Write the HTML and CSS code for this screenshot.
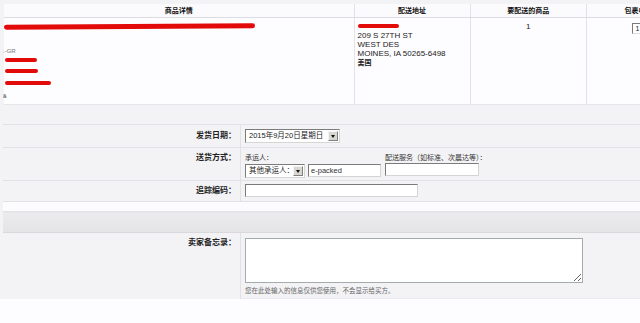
FILE: index.html
```html
<!DOCTYPE html>
<html lang="zh-CN">
<head>
  <meta charset="UTF-8">
  <title>确认发货</title>
  <link rel="stylesheet" href="styles.css">
</head>
<body>
<div class="page">
  <table class="items">
    <thead>
      <tr>
        <th class="c1">商品详情</th>
        <th class="c2">配送地址</th>
        <th class="c3">要配送的商品</th>
        <th class="c4">包裹中的商品</th>
      </tr>
    </thead>
    <tbody>
      <tr>
        <td class="c1">
          <div class="mask mask-title"></div>
          <div class="sku">.-GR</div>
          <div class="mask mask-s1"></div>
          <div class="mask mask-s2"></div>
          <div class="mask mask-s3"></div>
          <div class="sku">ã</div>
        </td>
        <td class="c2 addr">
          <div class="mask mask-name"></div>
          <div>209 S 27TH ST</div>
          <div>WEST DES</div>
          <div>MOINES, IA 50265-6498</div>
          <div class="cn">美国</div>
        </td>
        <td class="c3 qty"><div class="qty-in">1</div></td>
        <td class="c4 qty"><div class="qty-in"><span class="box">1</span></div></td>
      </tr>
    </tbody>
  </table>

  <table class="form">
    <tr class="blank"><td colspan="2"></td></tr>
    <tr class="r-date">
      <th>发货日期：</th>
      <td><span class="sel sel-date">2015年9月20日星期日<span class="arr"></span></span></td>
    </tr>
    <tr class="r-ship">
      <th>送货方式：</th>
      <td>
        <div class="ship">
          <div class="ship-a">
            <div class="small">承运人：</div>
            <div class="line">
              <span class="sel sel-carrier">其他承运人：<span class="arr"></span></span>
              <span class="inp inp-carrier">e-packed</span>
            </div>
          </div>
          <div class="ship-b">
            <div class="small">配送服务（如标准、次晨达等）：</div>
            <span class="inp inp-service"></span>
          </div>
        </div>
      </td>
    </tr>
    <tr class="r-track">
      <th>追踪编码：</th>
      <td><span class="inp inp-track"></span></td>
    </tr>
    <tr class="white"><td colspan="2"></td></tr>
    <tr class="band"><td colspan="2"></td></tr>
    <tr class="r-memo">
      <th>卖家备忘录：</th>
      <td>
        <textarea class="memo"></textarea>
        <div class="hint">您在此处输入的信息仅供您使用，不会显示给买方。</div>
      </td>
    </tr>
  </table>
</div>
</body>
</html>
```

FILE: styles.css
```css
body {
  margin: 0;
  background: #fdfcfe;
  font-family: "Liberation Sans", "Noto Sans CJK SC", sans-serif;
  color: #222;
  overflow: hidden;
  height: 323px;
}
.page {
  background: #f3f2f5;
  padding: 4px 0 0 4px;
  width: 700px;
}
table {
  border-collapse: collapse;
  border-spacing: 0;
}

/* 商品表 */
.items {
  width: 700px;
  table-layout: fixed;
}
.items .c1 { width: 349px; }
.items .c2 { width: 115px; }
.items .c3 { width: 115px; }
.items .c4 { width: 117px; }
.items thead tr { height: 13px; }
.items th {
  padding: 0;
  font-size: 7px;
  font-weight: bold;
  color: #111;
  background: #fbfafc;
  border-bottom: 1px solid #dddce1;
  border-left: 1px solid #e3e2e6;
  text-align: center;
  line-height: 11px;
  height: 12px;
  overflow: hidden;
}
.items th.c1 { border-left: none; }
.items tbody tr { height: 87px; }
.items td {
  padding: 0;
  vertical-align: top;
  background: #fdfcfe;
  border-left: 1px solid #e3e2e6;
  border-bottom: 1px solid #e6e5e9;
}
.items td.c1 { border-left: none; }
.mask {
  background: #e30a0a;
  border-radius: 3px;
}
.mask-title { width: 251px; height: 5px; margin-top: 6px; transform: rotate(-0.3deg); }
.mask-s1 { width: 32px; height: 4px; margin: 3px 0 0 1px; }
.mask-s2 { width: 33px; height: 4px; margin: 7px 0 0 1px; }
.mask-s3 { width: 46px; height: 4px; margin: 8px 0 0 1px; }
.sku {
  font-size: 6px;
  line-height: 8px;
  height: 8px;
  color: #777;
  margin: 18px 0 0 -1px;
}
.mask-s3 + .sku { margin-top: 7px; color: #444; }
.addr {
  font-size: 8px;
  line-height: 9px;
  color: #222;
}
.addr div { padding-left: 3px; }
.addr .mask-name { width: 41px; height: 4px; margin: 6px 0 3px 3px; padding: 0; }
.addr .cn { font-size: 7px; font-weight: bold; }
.qty {
  text-align: center;
  font-size: 8px;
}
.qty-in { padding-top: 4px; line-height: 10px; }
.box {
  display: inline-block;
  width: 22px;
  height: 9px;
  line-height: 9px;
  font-size: 7px;
  text-align: left;
  padding-left: 2px;
  border: 1px solid #7a7a7a;
  border-right-color: #ddd;
  border-bottom-color: #ddd;
  background: #fff;
  margin-top: 1px;
  vertical-align: top;
}

/* 发货表单 */
.form {
  width: 700px;
  margin-left: -1px;
  font-size: 7.5px;
}
.form th {
  width: 233px;
  padding: 0 4px 0 0;
  text-align: right;
  vertical-align: top;
  font-size: 8px;
  font-weight: bold;
  color: #222;
  border-right: 1px solid #e2e1e6;
  border-bottom: 1px solid #e2e1e6;
  line-height: 10px;
}
.form td {
  padding: 0 0 0 4px;
  vertical-align: top;
  border-bottom: 1px solid #e2e1e6;
}
.blank { height: 20px; }
.blank td { padding: 0; }
.r-date { height: 23px; }
.r-date th { padding-top: 6px; }
.r-date td { padding-top: 4px; }
.r-ship { height: 33px; }
.r-ship th { padding-top: 5px; }
.r-ship td { padding-top: 5px; }
.r-track { height: 21px; }
.r-track th { padding-top: 5px; }
.r-track td { padding-top: 3px; }
.white { height: 10px; }
.white td {
  padding: 0;
  background: #fcfbfd;
}
.band { height: 21px; }
.band td {
  padding: 0;
  background: linear-gradient(#ebeaed, #e4e3e6);
  border-bottom: 1px solid #d9d8dc;
}
.r-memo { height: 66px; }
.r-memo th {
  padding-top: 5px;
  border-bottom: none;
}
.r-memo td {
  padding-top: 5px;
  border-bottom: 1px solid #ebeaee;
}

.sel {
  position: relative;
  display: inline-block;
  height: 12px;
  line-height: 12px;
  padding-left: 3px;
  font-size: 7.5px;
  color: #222;
  background: #fff;
  border: 1px solid #7b7b7b;
  border-right-color: #d6d6d6;
  border-bottom-color: #d6d6d6;
  vertical-align: top;
  white-space: nowrap;
}
.sel-date { width: 90px; }
.sel-carrier { width: 56px; }
.arr {
  position: absolute;
  right: 1px;
  top: 1px;
  width: 10px;
  height: 10px;
  background: #d8d6d0;
  border: 1px solid #f4f4f4;
  border-right-color: #808080;
  border-bottom-color: #808080;
  box-sizing: border-box;
}
.arr::after {
  content: "";
  position: absolute;
  left: 2px;
  top: 3px;
  border-left: 2.5px solid transparent;
  border-right: 2.5px solid transparent;
  border-top: 3px solid #111;
}
.ship {
  display: flex;
  gap: 4px;
}
.small {
  font-size: 7px;
  line-height: 10px;
  height: 10px;
  color: #333;
}
.ship-a { width: 136px; }
.line {
  display: flex;
  gap: 3px;
  margin-top: 1px;
}
.inp {
  display: inline-block;
  height: 11px;
  line-height: 11px;
  padding-left: 2px;
  font-size: 7.5px;
  color: #333;
  background: #fff;
  border: 1px solid #7b7b7b;
  border-right-color: #d4d4d4;
  border-bottom-color: #d4d4d4;
  vertical-align: top;
  white-space: nowrap;
}
.inp-carrier { width: 70px; }
.inp-service { width: 90px; }
.inp-track { width: 169px; height: 11px; }
.memo {
  display: block;
  width: 338px;
  height: 45px;
  margin: 0;
  padding: 0;
  box-sizing: border-box;
  border: 1px solid #a3abab;
  background: #fff;
}
.hint {
  font-size: 6.5px;
  color: #666;
  margin-top: 4px;
  line-height: 8px;
}
```
